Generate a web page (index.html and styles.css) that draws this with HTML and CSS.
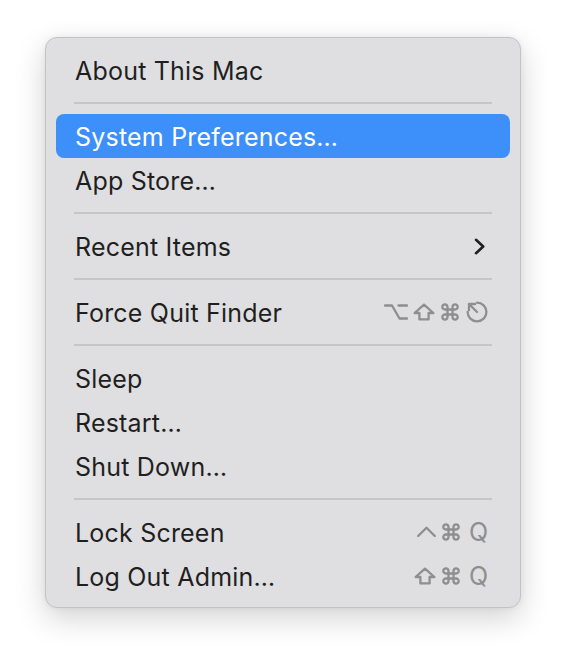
FILE: index.html
```html
<!DOCTYPE html>
<html>
<head>
<meta charset="utf-8">
<link rel="stylesheet" href="styles.css">
</head>
<body>
<div class="menu">
  <div class="item"><span class="label">About This Mac</span></div>
  <div class="sep"></div>
  <div class="item active"><span class="label">System Preferences…</span></div>
  <div class="item"><span class="label">App Store…</span></div>
  <div class="sep"></div>
  <div class="item">
    <span class="label">Recent Items</span>
    <svg class="chev" width="11" height="17" viewBox="0 0 11 17"><path d="M2 1.8 L9.2 8.5 L2 15.2" /></svg>
  </div>
  <div class="sep"></div>
  <div class="item">
    <span class="label">Force Quit Finder</span>
    <span class="keys">
      <svg class="k" width="24" height="18" viewBox="0 0 24 18"><path d="M1 2.5 H8 L15.5 15.5 H23 M14.5 2.5 H23" /></svg>
      <svg class="k" width="22" height="18" viewBox="0 0 22 18"><path d="M11 1.6 L20.4 10 H15.6 V16.4 H6.4 V10 H1.6 Z" /></svg>
      <svg class="k" width="20" height="20" viewBox="0 0 20 20"><path d="M7.5 7.5 V5 A2.6 2.6 0 1 0 5 7.5 H15 A2.6 2.6 0 1 0 12.5 5 V15 A2.6 2.6 0 1 0 15 12.5 H5 A2.6 2.6 0 1 0 7.5 15 Z" /></svg>
      <svg class="k" width="23" height="22" viewBox="0 0 23 22"><path d="M12 1.6 A9.4 9.4 0 1 1 2.6 11 M12 11 L4 3 M4 9.2 V3 H10.2" /></svg>
    </span>
  </div>
  <div class="sep"></div>
  <div class="item"><span class="label">Sleep</span></div>
  <div class="item"><span class="label">Restart…</span></div>
  <div class="item"><span class="label">Shut Down…</span></div>
  <div class="sep"></div>
  <div class="item">
    <span class="label">Lock Screen</span>
    <span class="keys">
      <svg class="k" width="19" height="18" viewBox="0 0 19 18"><path d="M1.2 13 L9.5 4.7 L17.8 13" /></svg>
      <svg class="k" width="20" height="20" viewBox="0 0 20 20"><path d="M7.5 7.5 V5 A2.6 2.6 0 1 0 5 7.5 H15 A2.6 2.6 0 1 0 12.5 5 V15 A2.6 2.6 0 1 0 15 12.5 H5 A2.6 2.6 0 1 0 7.5 15 Z" /></svg>
      <span class="q">Q</span>
    </span>
  </div>
  <div class="item">
    <span class="label">Log Out Admin…</span>
    <span class="keys">
      <svg class="k" width="22" height="18" viewBox="0 0 22 18"><path d="M11 1.6 L20.4 10 H15.6 V16.4 H6.4 V10 H1.6 Z" /></svg>
      <svg class="k" width="20" height="20" viewBox="0 0 20 20"><path d="M7.5 7.5 V5 A2.6 2.6 0 1 0 5 7.5 H15 A2.6 2.6 0 1 0 12.5 5 V15 A2.6 2.6 0 1 0 15 12.5 H5 A2.6 2.6 0 1 0 7.5 15 Z" /></svg>
      <span class="q">Q</span>
    </span>
  </div>
</div>
</body>
</html>
```

FILE: styles.css
```css
html {
  height: 100%;
  background: #ffffff;
}
body {
  margin: 0;
  min-height: 100%;
  box-sizing: border-box;
  padding: 37px 0 0 45px;
  font-family: "Inter", "Liberation Sans", sans-serif;
}
.menu {
  box-sizing: border-box;
  width: 476px;
  height: 571px;
  background: #dfdfe1;
  border: 1px solid #c3c3c5;
  border-radius: 12px;
  padding: 10px 10px 9px 10px;
  box-shadow: 0 10px 30px rgba(0, 0, 0, 0.18), 0 0 6px rgba(0, 0, 0, 0.06);
}
.item {
  height: 44px;
  display: flex;
  align-items: center;
  justify-content: space-between;
  padding: 1px 22px 0 19px;
  box-sizing: border-box;
  border-radius: 8px;
  color: #1f1f1f;
  font-size: 25px;
  letter-spacing: 0.2px;
}
.item.active {
  background: #3d8ff9;
  color: #ffffff;
}
.label {
  white-space: nowrap;
}
.sep {
  height: 2px;
  margin: 10px 18px 10px 18px;
  background: #c6c6c8;
}
.chev {
  margin-right: 3px;
}
.chev path {
  fill: none;
  stroke: #1f1f1f;
  stroke-width: 2.6;
  stroke-linecap: round;
  stroke-linejoin: round;
}
.keys {
  display: flex;
  align-items: center;
  gap: 5px;
  margin-top: -1px;
  color: #8e8e91;
}
.k path {
  fill: none;
  stroke: #8e8e91;
  stroke-width: 2.3;
  stroke-linecap: round;
  stroke-linejoin: round;
}
.q {
  font-size: 25px;
  line-height: 1;
  margin-left: 3px;
  letter-spacing: 0;
  color: #8e8e91;
}
```
